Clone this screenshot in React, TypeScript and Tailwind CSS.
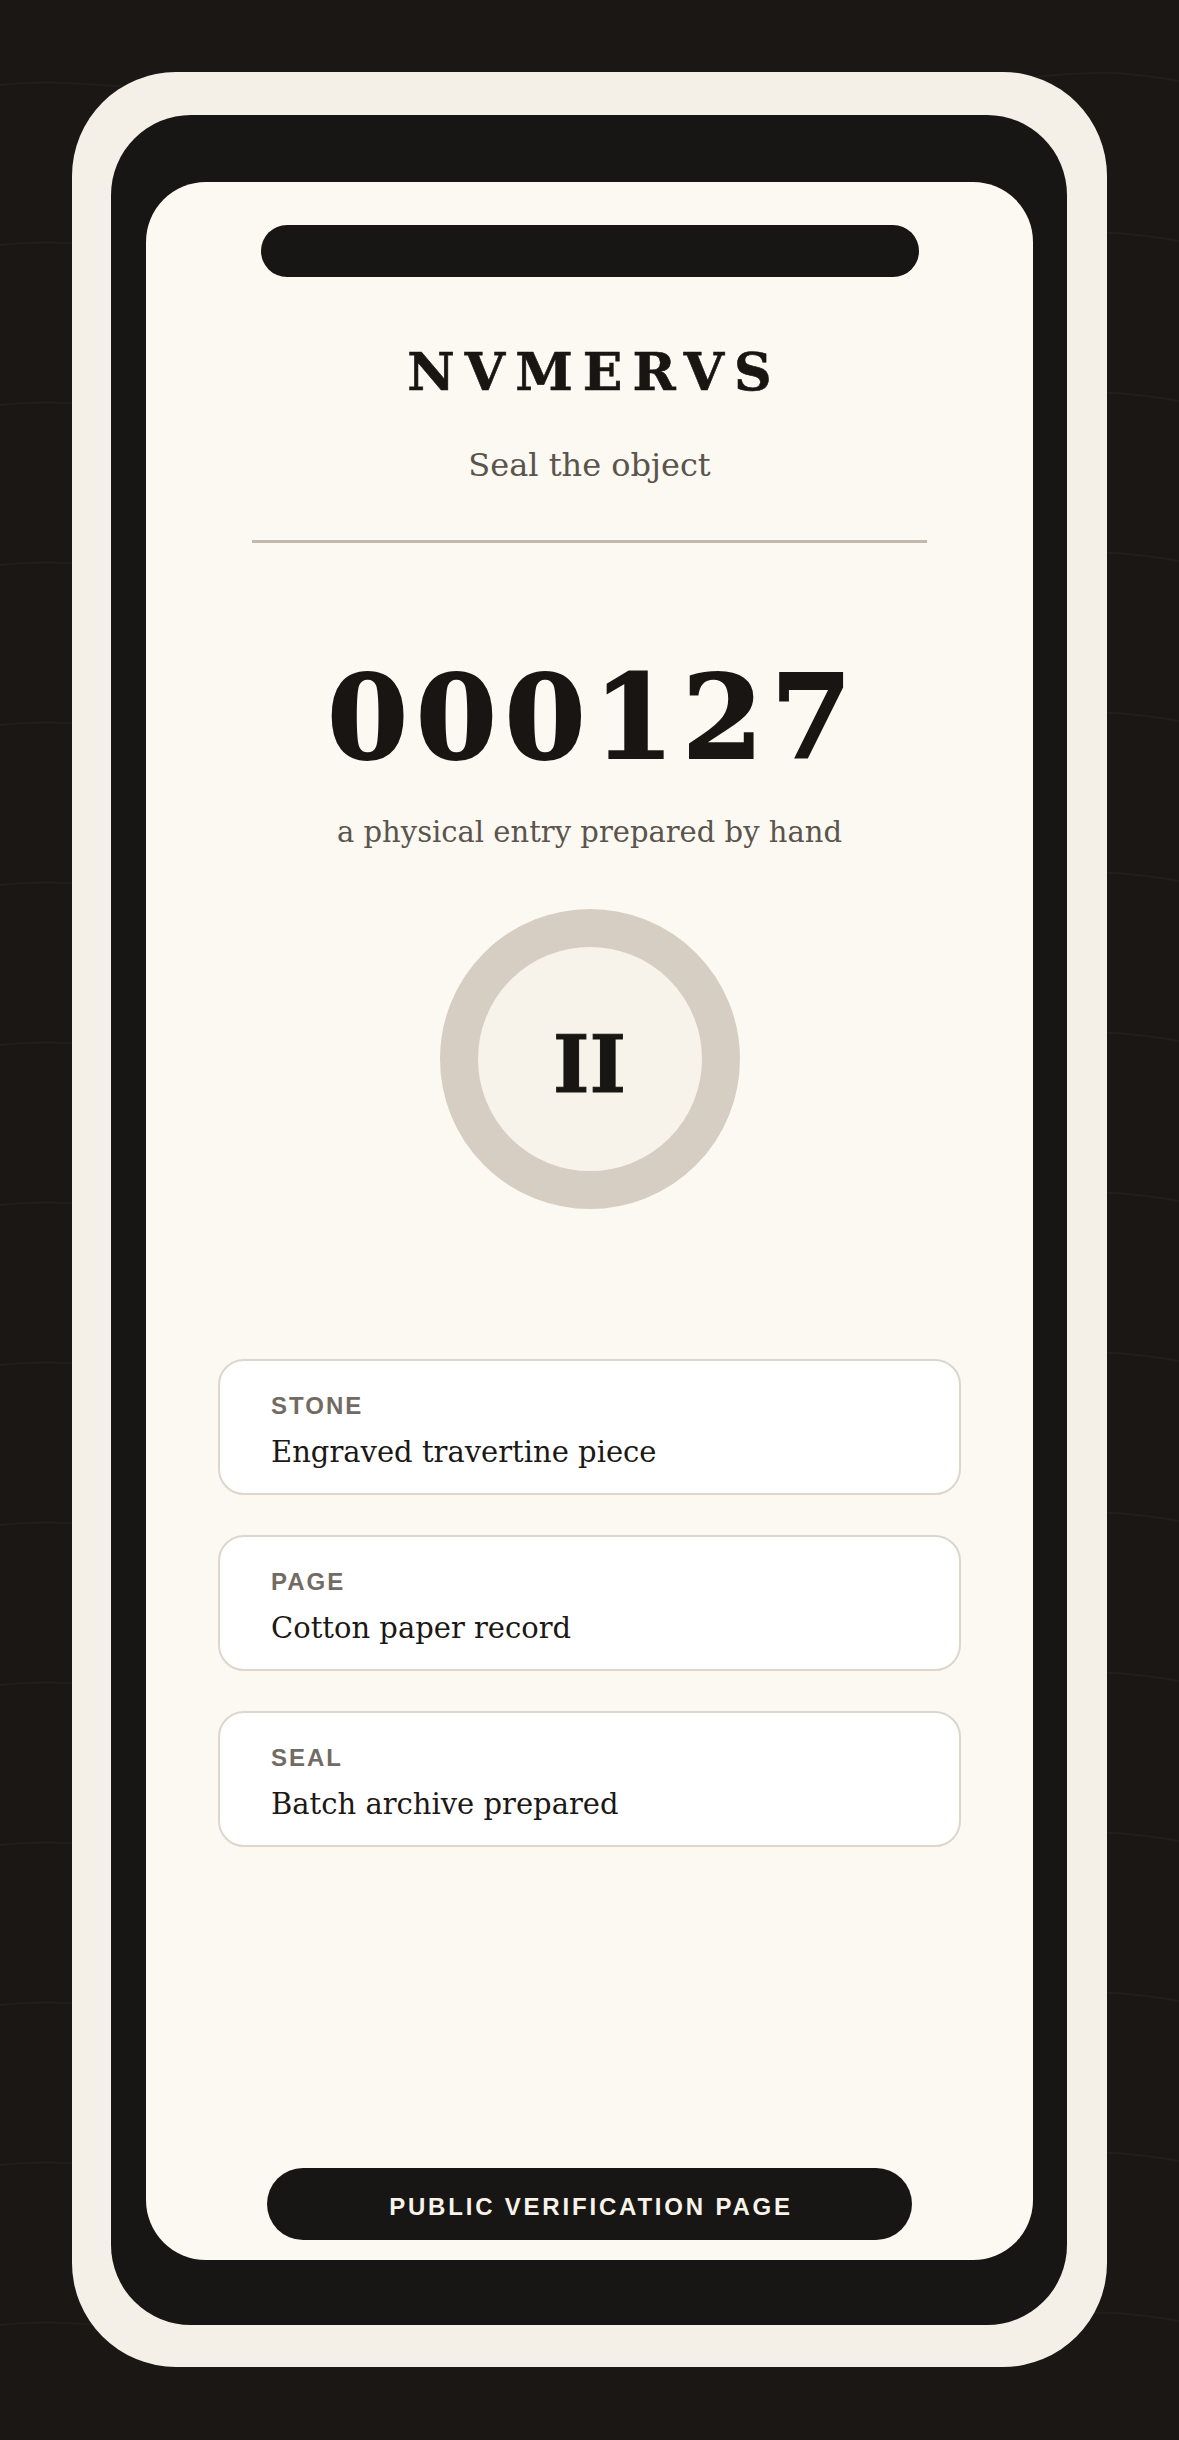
import React from 'react';

const serif = { fontFamily: '"DejaVu Serif", "Liberation Serif", serif' };
const sans = { fontFamily: '"Liberation Sans", Arial, sans-serif' };

const entries = [
  { label: 'STONE', value: 'Engraved travertine piece' },
  { label: 'PAGE', value: 'Cotton paper record' },
  { label: 'SEAL', value: 'Batch archive prepared' },
];

const Waves: React.FC = () => {
  const rows = Array.from({ length: 16 }, (_, i) => 85 + i * 160);
  return (
    <svg className="pointer-events-none absolute inset-0 h-full w-full" viewBox="0 0 1179 2440" preserveAspectRatio="none">
      {rows.map((y) => (
        <path
          key={y}
          d={`M0 ${y} C 60 ${y - 8}, 120 ${y + 6}, 200 ${y + 2} S 400 ${y - 6}, 590 ${y} S 900 ${y + 8}, 1000 ${y - 4} S 1120 ${y - 14}, 1179 ${y - 4}`}
          fill="none"
          stroke="#221e1b"
          strokeWidth="2"
        />
      ))}
    </svg>
  );
};

const EntryCard: React.FC<{ label: string; value: string }> = ({ label, value }) => (
  <div className="h-[136px] rounded-[26px] border-2 border-[#dcd6cc] bg-white pl-[51px] pt-[33px]">
    <div className="text-[24px] font-bold leading-none tracking-[2px] text-[#726b63]" style={sans}>
      {label}
    </div>
    <div className="mt-[20px] text-[29px] leading-none text-[#1b1815]" style={serif}>
      {value}
    </div>
  </div>
);

export default function App() {
  return (
    <div className="relative flex h-[2440px] w-full justify-center overflow-hidden bg-[#1a1715]">
      <Waves />
      <div className="relative mt-[72px] flex h-[2295px] w-[1035px] flex-col rounded-[104px] bg-[#f5f0e7] pb-[42px] pl-[39px] pr-[40px] pt-[43px]">
        <div className="flex flex-1 flex-col rounded-[80px] bg-[#181614] pb-[65px] pl-[35px] pr-[34px] pt-[67px]">
          <div className="flex flex-1 flex-col items-center rounded-[60px] bg-[#fbf9f2] pb-[20px] pt-[43px]">
            <div className="h-[52px] w-[658px] rounded-full bg-[#181614]" />

            <h1
              className="mt-[69px] pl-[10px] text-[52px] font-bold leading-none tracking-[10px] text-[#181512] [-webkit-text-stroke:0.6px_#181512]"
              style={serif}
            >
              NVMERVS
            </h1>
            <p className="mt-[51px] text-[32px] leading-none text-[#5b544d]" style={serif}>
              Seal the object
            </p>

            <div className="mt-[59px] h-[3px] w-[675px] bg-[#c2b9ac]" />

            <div
              className="mt-[116px] pl-[8px] text-[116px] font-bold leading-none tracking-[8px] text-[#181512] [-webkit-text-stroke:2px_#181512]"
              style={serif}
            >
              000127
            </div>
            <p className="mt-[43px] text-[29px] leading-none text-[#5b544d]" style={serif}>
              a physical entry prepared by hand
            </p>

            <div className="mt-[62px] flex h-[300px] w-[300px] items-center justify-center rounded-full border-[38px] border-[#d6cec3] bg-[#f7f3eb]">
              <span
                className="pt-3 text-[78px] font-bold leading-none text-[#181512] [-webkit-text-stroke:1px_#181512]"
                style={serif}
              >
                II
              </span>
            </div>

            <div className="mt-[150px] flex w-[743px] flex-col gap-[40px]">
              {entries.map((e) => (
                <EntryCard key={e.label} label={e.label} value={e.value} />
              ))}
            </div>

            <button
              className="mt-auto flex h-[72px] w-[645px] items-center justify-center rounded-full bg-[#181614] pl-[3px] pt-[6px] text-[24px] font-bold leading-none tracking-[2.8px] text-[#f7f3ea]"
              style={sans}
            >
              PUBLIC VERIFICATION PAGE
            </button>
          </div>
        </div>
      </div>
    </div>
  );
}
